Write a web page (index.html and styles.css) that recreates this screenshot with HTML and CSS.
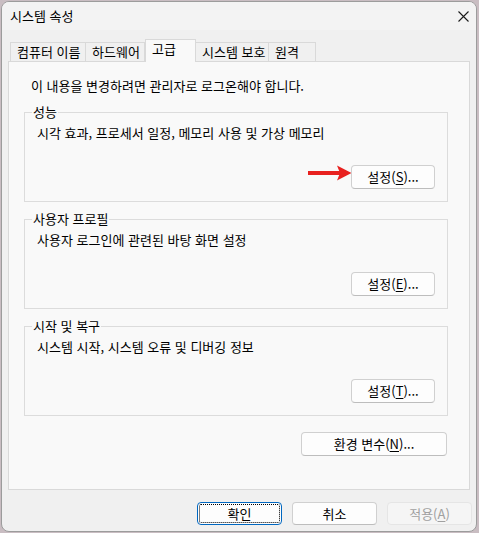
FILE: index.html
```html
<!DOCTYPE html>
<html lang="ko">
<head>
<meta charset="utf-8">
<link rel="stylesheet" href="styles.css">
</head>
<body>
<div class="window">
  <div class="titlebar">
    <span class="title">시스템 속성</span>
    <svg class="close" width="11" height="11" viewBox="0 0 11 11"><path d="M0.5 0.5 L10.5 10.5 M10.5 0.5 L0.5 10.5" stroke="#1b1b1b" stroke-width="1.1" fill="none"/></svg>
  </div>
  <div class="tabs">
    <div class="tab t1">컴퓨터 이름</div>
    <div class="tab t2">하드웨어</div>
    <div class="tab sel">고급</div>
    <div class="tab t4">시스템 보호</div>
    <div class="tab t5">원격</div>
  </div>
  <div class="panel">
    <div class="note">이 내용을 변경하려면 관리자로 로그온해야 합니다.</div>
    <div class="group first">
      <div class="glabel">성능</div>
      <div class="gdesc">시각 효과, 프로세서 일정, 메모리 사용 및 가상 메모리</div>
      <div class="grow">
        <svg class="arrow" width="44" height="18" viewBox="0 0 44 18"><rect x="0" y="7" width="32" height="4" fill="#e8211f"/><polygon points="29,1.5 43.5,9 29,16.5 32,9" fill="#e8211f"/></svg>
        <button class="btn">설정(<u>S</u>)...</button>
      </div>
    </div>
    <div class="group">
      <div class="glabel">사용자 프로필</div>
      <div class="gdesc">사용자 로그인에 관련된 바탕 화면 설정</div>
      <div class="grow">
        <button class="btn">설정(<u>E</u>)...</button>
      </div>
    </div>
    <div class="group">
      <div class="glabel">시작 및 복구</div>
      <div class="gdesc">시스템 시작, 시스템 오류 및 디버깅 정보</div>
      <div class="grow">
        <button class="btn">설정(<u>T</u>)...</button>
      </div>
    </div>
    <div class="envrow">
      <button class="btn env">환경 변수(<u>N</u>)...</button>
    </div>
  </div>
  <div class="actions">
    <button class="btn act focus">확인</button>
    <button class="btn act">취소</button>
    <button class="btn act disabled">적용(<u>A</u>)</button>
  </div>
</div>
</body>
</html>
```
FILE: styles.css
```css
html, body {
  margin: 0;
  padding: 0;
}
body {
  width: 479px;
  height: 533px;
  overflow: hidden;
  background: #c9bdc2;
  font-family: "Noto Sans CJK KR", "Noto Sans", sans-serif;
  font-size: 13px;
  color: #000;
}
.window {
  box-sizing: border-box;
  margin: 1px 0 0 1px;
  width: 476px;
  height: 531px;
  border: 1px solid #9c9c9c;
  border-radius: 8px;
  background: #f0f0f0;
  overflow: hidden;
  display: flex;
  flex-direction: column;
}
.titlebar {
  height: 28px;
  flex: none;
  display: flex;
  align-items: center;
  justify-content: space-between;
  padding: 0 7px 0 8px;
  background: #f3f3f3;
}
.title {
  line-height: 16px;
  color: #000;
}
.close {
  display: block;
}
.tabs {
  margin-top: 9px;
  padding-left: 8px;
  height: 22px;
  display: flex;
  align-items: flex-end;
  flex: none;
}
.tab {
  box-sizing: border-box;
  height: 19px;
  border: 1px solid #d9d9d9;
  border-bottom: none;
  margin-right: -1px;
  padding-left: 6px;
  line-height: 18px;
  background: #f0f0f0;
  white-space: nowrap;
}
.t1 { width: 76px; }
.t2 { width: 60px; }
.sel {
  width: 51px;
  height: 23px;
  margin-left: 1px;
  margin-bottom: -1px;
  padding-left: 6px;
  line-height: 17px;
  background: #f9f9f9;
  position: relative;
  z-index: 2;
}
.t4 { width: 74px; }
.t5 { width: 48px; }
.panel {
  box-sizing: border-box;
  margin-left: 6px;
  width: 462px;
  height: 429px;
  flex: none;
  border: 1px solid #d9d9d9;
  background: #f9f9f9;
  padding-top: 16px;
}
.note {
  line-height: 16px;
  padding-left: 22px;
}
.group {
  margin: 17px 21px 0 15px;
  border: 1px solid #dcdcdc;
  padding-bottom: 12px;
}
.group.first {
  margin-top: 18px;
}
.glabel {
  margin-top: -9px;
  margin-left: 7px;
  padding: 0 1px;
  width: fit-content;
  line-height: 16px;
  background: #f9f9f9;
}
.gdesc {
  margin-top: 5px;
  padding-left: 12px;
  line-height: 16px;
}
.grow {
  margin-top: 24px;
  display: flex;
  justify-content: flex-end;
  align-items: flex-start;
  padding-right: 12px;
}
.arrow {
  display: block;
  margin-top: -1px;
  margin-right: -1px;
}
.btn {
  box-sizing: border-box;
  font-family: "Noto Sans CJK KR", "Noto Sans", sans-serif;
  font-size: 13px;
  color: #000;
  background: #fdfdfd;
  border: 1px solid #d0d0d0;
  border-bottom-color: #bdbdbd;
  border-radius: 4px;
  width: 84px;
  height: 24px;
  padding: 0;
  margin: 0;
  line-height: 20px;
  text-align: center;
}
.btn u {
  text-underline-offset: 2px;
}
.envrow {
  margin-top: 16px;
  display: flex;
  justify-content: flex-end;
  padding-right: 22px;
}
.env {
  width: 146px;
}
.actions {
  margin-top: 12px;
  display: flex;
  justify-content: flex-end;
  gap: 10px;
  padding-right: 4px;
}
.act {
  width: 85px;
  height: 23px;
  line-height: 19px;
}
.focus {
  border: 1px solid #0067c0;
  outline: 1px dotted #000;
  outline-offset: -3px;
}
.disabled {
  background: #f5f5f5;
  border-color: #e5e5e5;
  color: #a0a0a0;
}
```
